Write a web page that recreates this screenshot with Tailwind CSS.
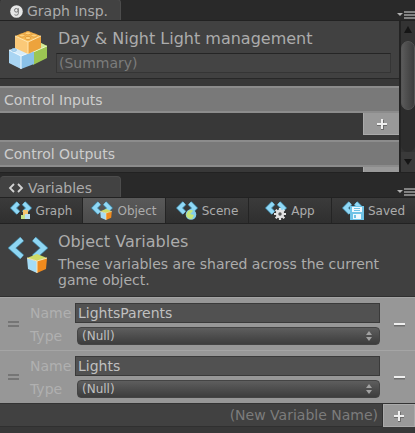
<!DOCTYPE html>
<html lang="en">
<head>
    <meta charset="UTF-8">
    <meta name="viewport" content="width=device-width, initial-scale=1.0">
    <title>Graph Inspector</title>
    <script src="https://cdn.jsdelivr.net/npm/@tailwindcss/browser@4"></script>
</head>
<body class="bg-[#383838] text-[#acacac] font-['DejaVu_Sans',_Verdana,_sans-serif] text-sm leading-4 min-h-screen">

    <!-- Shared icon shapes -->
    <svg class="hidden" aria-hidden="true">
        <symbol id="brackets" viewBox="0 0 40 26">
            <path d="M15 4 6 13l9 9M25 4l9 9-9 9" fill="none" stroke="#3f7d98" stroke-width="10"/>
            <path d="M15 4 6 13l9 9M25 4l9 9-9 9" fill="none" stroke="#8fd8f6" stroke-width="7"/>
        </symbol>
        <symbol id="cube" viewBox="0 0 20 19">
            <path d="M0 4 10 7v12L1 15z" fill="#a5dcf5"/>
            <path d="M10 7 20 4l-1 11-9 4z" fill="#f08a1d"/>
            <path d="M0 4 10 0l10 4-10 3z" fill="#cfdc66"/>
            <path d="M0 4l10 3 10-3M10 7v12" fill="none" stroke="#f8e6b8" stroke-width="1"/>
        </symbol>
        <symbol id="plus" viewBox="0 0 12 12">
            <path d="M5 2h3v3h3v3H8v4H5V8H1V5h4z" fill="#6c6c6c"/>
            <path d="M5 1h2v4h4v2H7v4H5V7H1V5h4z" fill="#efefef"/>
        </symbol>
        <symbol id="pane-menu" viewBox="0 0 18 8">
            <path d="M0 2h6L3 5z" fill="#b0b0b0"/>
            <path d="M7 1h11M7 4h11M7 7h11" stroke="#a0a0a0" stroke-width="1.6"/>
        </symbol>
        <symbol id="updown" viewBox="0 0 6 10">
            <path d="M3 0l3 4H0zM0 6h6l-3 4z" fill="#a2a2a2"/>
        </symbol>
    </svg>

    <!-- Graph inspector -->
    <section>
        <header class="flex items-end justify-between h-[21px] bg-[#292929] border-b border-[#222]">
            <h2 class="flex items-center gap-1 w-[121px] h-[21px] pl-2.5 pt-0.5 rounded-t bg-[#424242] border-t border-r border-[#4c4c4c] whitespace-nowrap">
                <svg width="13" height="13" viewBox="0 0 13 13" class="shrink-0"><circle cx="6.5" cy="6.5" r="6.3" fill="#e6e6e6"/><circle cx="6.3" cy="5.3" r="1.8" fill="none" stroke="#777" stroke-width="1"/><path d="M8.3 3.2v5.3q0 1.7-2 1.7-1.2 0-1.8-.5" fill="none" stroke="#777"/></svg>
                Graph Insp.
            </h2>
            <button type="button" aria-label="Pane options" class="pb-px"><svg width="18" height="8"><use href="#pane-menu"/></svg></button>
        </header>

        <div class="flex h-[151px] overflow-hidden">
            <div class="flex-1 min-w-0">
                <div class="flex gap-2 h-[58px] pl-2 pr-2 pt-2 bg-[#414141] border-b border-[#282828]">
                    <svg width="40" height="40" viewBox="0 0 40 40" class="shrink-0 mt-0.5">
                        <path d="M25 16 33 12l6 3v12L25 34z" fill="#9cc653"/>
                        <path d="M25 19 33 12l6 3-13 6z" fill="#d3e997"/>
                        <path d="M25 21l14-6" stroke="#ecf6c8"/>
                        <path d="M1 19 13 15l13 6-13 5z" fill="#d6ecfa"/>
                        <path d="M1 19l12 6v13L1 32z" fill="#a9d5f3"/>
                        <path d="M13 25l13-5v13l-13 5z" fill="#8ac1e8"/>
                        <path d="M1 19l12 6 13-5M13 25v13" fill="none" stroke="#f1faff"/>
                        <path d="M7 5 20 0l13 5-13 7z" fill="#f8bb55"/>
                        <path d="M7 5l13 6v12L7 17z" fill="#fbc978"/>
                        <path d="M20 11l13-6v12l-13 6z" fill="#eda33c"/>
                        <path d="M7 5l13 6 13-6M20 11v12" fill="none" stroke="#ffe6b0"/>
                        <g fill="#ffd27c" stroke="#d98d2c" stroke-width=".7"><ellipse cx="14" cy="4.5" rx="3" ry="1.6"/><ellipse cx="20" cy="2.3" rx="3" ry="1.6"/><ellipse cx="20" cy="7" rx="3" ry="1.6"/><ellipse cx="26" cy="4.5" rx="3" ry="1.6"/></g>
                        <ellipse cx="6" cy="19" rx="2.5" ry="1.4" fill="#b5daf4" stroke="#80b8de" stroke-width=".7"/>
                    </svg>
                    <div class="flex-1 min-w-0">
                        <h1 class="pl-0.5 text-base leading-5 whitespace-nowrap">Day &amp; Night Light management</h1>
                        <input type="text" aria-label="Summary" placeholder="(Summary)" class="block w-full h-5 mt-1 px-0.5 bg-[#444] border border-[#353535] border-t-[#252525] placeholder:text-[#7c7c7c]">
                    </div>
                </div>

                <div class="pt-[7px]">
                    <h3 class="h-[27px] px-1 py-1 bg-[#797979] border-y-2 border-[#8c8c8c] flex items-center text-[#cdcdcd]">Control Inputs</h3>
                    <div class="flex justify-end items-start h-[27px]">
                        <button type="button" aria-label="Add control input" class="flex items-center justify-center w-9 h-[22px] bg-[#999] border-l border-b border-[#aaa]"><svg width="12" height="12"><use href="#plus"/></svg></button>
                    </div>
                    <h3 class="h-[27px] px-1 py-1 bg-[#797979] border-y-2 border-[#8c8c8c] flex items-center text-[#cdcdcd]">Control Outputs</h3>
                    <div class="flex justify-end items-start h-[27px]">
                        <button type="button" aria-label="Add control output" class="flex items-center justify-center w-9 h-[22px] bg-[#999] border-l border-b border-[#aaa]"><svg width="12" height="12"><use href="#plus"/></svg></button>
                    </div>
                </div>
            </div>

            <!-- Scroll bar -->
            <div class="flex flex-col w-4 shrink-0 bg-[#333] border-l-2 border-[#232323]">
                <svg width="14" height="20" viewBox="0 0 14 20" class="shrink-0"><path d="M7 5l4 7H3z" fill="#151515"/></svg>
                <div class="flex-1 rounded-full bg-[#2c2c2c]">
                    <div class="h-[69px] rounded-full border border-[#565656] bg-linear-to-r from-[#5a5a5a] to-[#3c3c3c]"></div>
                </div>
                <svg width="14" height="20" viewBox="0 0 14 20" class="shrink-0 bg-[#3a3a3a]"><path d="M3 7h8l-4 6z" fill="#151515"/></svg>
            </div>
        </div>
    </section>

    <!-- Variables -->
    <section class="border-t border-[#222]">
        <header class="flex items-end justify-between h-6 bg-[#292929]">
            <h2 class="flex items-center gap-1 w-[121px] h-[21px] pl-2 pt-0.5 rounded-t bg-[#424242] border-t border-r border-[#4c4c4c]">
                <svg width="16" height="10" viewBox="0 0 16 10" class="shrink-0"><path d="M6 1 2 5l4 4M10 1l4 4-4 4" fill="none" stroke="#d4d4d4" stroke-width="1.8"/></svg>
                Variables
            </h2>
            <button type="button" aria-label="Pane options" class="pb-px"><svg width="18" height="8"><use href="#pane-menu"/></svg></button>
        </header>

        <nav class="grid grid-cols-5 h-[27px] bg-linear-to-b from-[#3b3b3b] to-[#2f2f2f] border-y border-[#222] text-xs">
            <button type="button" class="flex items-center justify-center gap-1 border-r border-[#242424]">
                <svg width="22" height="20" viewBox="0 0 22 20" class="shrink-0"><use href="#brackets" width="22" height="14"/><path d="M13 9h5v5h-5z" fill="#f5c56f"/><path d="M11 14h4v4h-4z" fill="#c4df86"/><path d="M15 13h5v5h-5z" fill="#b9def2"/></svg>
                Graph
            </button>
            <button type="button" class="flex items-center justify-center gap-1 border-r border-[#242424] bg-linear-to-b from-[#595959] to-[#4b4b4b]">
                <svg width="22" height="20" viewBox="0 0 22 20" class="shrink-0"><use href="#brackets" width="22" height="14"/><use href="#cube" x="9" y="8" width="12" height="11"/></svg>
                Object
            </button>
            <button type="button" class="flex items-center justify-center gap-1 border-r border-[#242424]">
                <svg width="22" height="20" viewBox="0 0 22 20" class="shrink-0"><use href="#brackets" width="22" height="14"/><circle cx="15" cy="13.5" r="5.3" fill="#83cdea"/><path d="M12 10q4-2 5 0l-3 3 4 1-2 4q-5 0-6-4z" fill="#c5e57a"/></svg>
                Scene
            </button>
            <button type="button" class="flex items-center justify-center gap-1 border-r border-[#242424]">
                <svg width="22" height="20" viewBox="0 0 22 20" class="shrink-0"><use href="#brackets" width="22" height="14"/><path d="M15 7v12M9 13h12M10.7 8.7l8.6 8.6M19.3 8.7l-8.6 8.6" stroke="#e2e2e2" stroke-width="2.2"/><circle cx="15" cy="13" r="4.2" fill="#e2e2e2"/><circle cx="15" cy="13" r="1.7" fill="#555"/></svg>
                App
            </button>
            <button type="button" class="flex items-center justify-center gap-1">
                <svg width="22" height="20" viewBox="0 0 22 20" class="shrink-0"><use href="#brackets" width="22" height="14"/><path d="M8 5h14v14H8z" fill="#6fc3e6"/><path d="M10 6h10v5H10zM11 13h8v5h-8z" fill="#eef8fd"/><path d="M12 7h6v1h-6zM12 9h6v1h-6zM12 14h2v3h-2z" fill="#6fc3e6"/></svg>
                Saved
            </button>
        </nav>

        <div class="flex gap-2 min-h-[73px] pl-2 pr-2 pt-2 bg-[#404040] border-b border-[#303030]">
            <svg width="40" height="42" viewBox="0 0 40 42" class="shrink-0">
                <path d="M14 7 4 16l10 9M26 7l10 9-10 9" fill="none" stroke="#3f7d98" stroke-width="6"/>
                <path d="M14 7 4 16l10 9M26 7l10 9-10 9" fill="none" stroke="#8ed6f3" stroke-width="4.6"/>
                <use href="#cube" x="19" y="22" width="20" height="19"/>
            </svg>
            <div class="flex-1 min-w-0 pl-0.5">
                <h1 class="text-base leading-5">Object Variables</h1>
                <p class="mt-1">These variables are shared across the current game object.</p>
            </div>
        </div>

        <ul class="text-[#b4b4b4]">
            <li class="flex items-center h-[53px] pl-2 bg-[#979797] border-t border-[#a5a5a5]">
                <svg width="11" height="6" class="shrink-0"><path d="M0 1h11M0 5h11" stroke="#6b6b6b" stroke-width="1.3"/></svg>
                <div class="flex-1 min-w-0 grid grid-cols-[45px_1fr] gap-y-1 pl-[11px] items-center">
                    <label for="name-1" class="text-[#b0b0b0]">Name</label>
                    <input id="name-1" type="text" value="LightsParents" class="min-w-0 h-5 px-0.5 bg-[#515151] border border-[#3a3a3a] text-[#c0c0c0]">
                    <label for="type-1" class="text-[#b0b0b0]">Type</label>
                    <div class="relative ml-0.5">
                        <select id="type-1" class="block w-full h-[18px] pl-1 appearance-none rounded bg-linear-to-b from-[#5e5e5e] to-[#3d3d3d] border border-[#444] text-xs text-[#c0c0c0]"><option>(Null)</option></select>
                        <svg width="6" height="10" class="absolute right-2 top-1 pointer-events-none"><use href="#updown"/></svg>
                    </div>
                </div>
                <button type="button" aria-label="Remove LightsParents" class="flex items-center justify-center w-[35px] h-full pl-1"><svg width="11" height="5"><path d="M0 3.5h11" stroke="#6e6e6e" stroke-width="2"/><path d="M0 2h11" stroke="#efefef" stroke-width="2"/></svg></button>
            </li>
            <li class="flex items-center h-[53px] pl-2 bg-[#979797] border-t border-[#a5a5a5]">
                <svg width="11" height="6" class="shrink-0"><path d="M0 1h11M0 5h11" stroke="#6b6b6b" stroke-width="1.3"/></svg>
                <div class="flex-1 min-w-0 grid grid-cols-[45px_1fr] gap-y-1 pl-[11px] items-center">
                    <label for="name-2" class="text-[#b0b0b0]">Name</label>
                    <input id="name-2" type="text" value="Lights" class="min-w-0 h-5 px-0.5 bg-[#515151] border border-[#3a3a3a] text-[#c0c0c0]">
                    <label for="type-2" class="text-[#b0b0b0]">Type</label>
                    <div class="relative ml-0.5">
                        <select id="type-2" class="block w-full h-[18px] pl-1 appearance-none rounded bg-linear-to-b from-[#5e5e5e] to-[#3d3d3d] border border-[#444] text-xs text-[#c0c0c0]"><option>(Null)</option></select>
                        <svg width="6" height="10" class="absolute right-2 top-1 pointer-events-none"><use href="#updown"/></svg>
                    </div>
                </div>
                <button type="button" aria-label="Remove Lights" class="flex items-center justify-center w-[35px] h-full pl-1"><svg width="11" height="5"><path d="M0 3.5h11" stroke="#6e6e6e" stroke-width="2"/><path d="M0 2h11" stroke="#efefef" stroke-width="2"/></svg></button>
            </li>
        </ul>

        <form class="flex h-6 bg-[#414141] border-t border-[#333]">
            <input type="text" aria-label="New variable name" placeholder="(New Variable Name)" class="flex-1 min-w-0 px-1 text-right border-b border-r border-[#303030] placeholder:text-[#7c7c7c]">
            <button type="button" aria-label="Add variable" class="flex items-center justify-center w-8 bg-[#999] border border-[#aaa]"><svg width="12" height="12"><use href="#plus"/></svg></button>
        </form>
    </section>

</body>
</html>
